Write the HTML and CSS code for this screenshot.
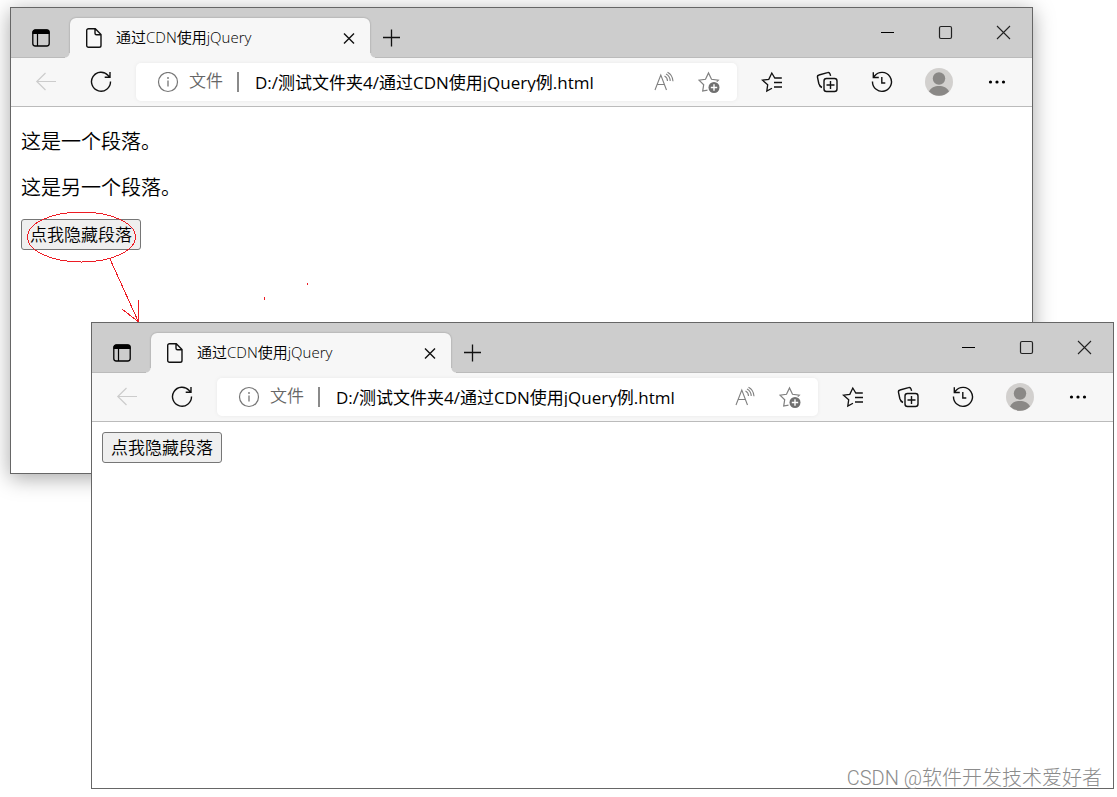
FILE: index.html
```
<!DOCTYPE html>
<html lang="zh-CN">
<head>
    <meta charset="UTF-8">
    <title>通过CDN使用jQuery</title>
    <link rel="stylesheet" href="styles.css">
</head>
<body>
    <!-- 图标 -->
    <svg class="icons" aria-hidden="true">
        <symbol id="i-tabs" viewBox="0 0 20 20"><rect x="1.8" y="2" width="16.4" height="16" rx="2.5" fill="none" stroke="#000" stroke-width="1.3"/><path d="M1.5 6V4.5a3 3 0 0 1 3-3h11a3 3 0 0 1 3 3V6z"/><path d="M6.5 6v12" stroke="#000" stroke-width="1.2"/></symbol>
        <symbol id="i-page" viewBox="0 0 20 20"><path d="M4.5 .8h6.8l5.7 5.700v11a1.8 1.8 0 0 1-1.8 1.8H4.500a1.800 1.800 0 0 1-1.800-1.800V2.600A1.800 1.800 0 0 1 4.500.8zM11 1v4.300a1.500 1.500 0 0 0 1.500 1.500h4.300" fill="none" stroke="#111" stroke-width="1.4"/></symbol>
        <symbol id="i-close" viewBox="0 0 20 20"><path d="M5 5.500l10 10M15 5.500l-10 10" stroke="#111" stroke-width="1.4"/></symbol>
        <symbol id="i-plus" viewBox="0 0 20 20"><path d="M10.500 1.500v17M2 9.500h17" stroke="#111" stroke-width="1.3"/></symbol>
        <symbol id="i-min" viewBox="0 0 20 20"><path d="M4 9.500h13" stroke="#000"/></symbol>
        <symbol id="i-max" viewBox="0 0 20 20"><rect x="4.500" y="3.500" width="12" height="12" rx="1.500" fill="none" stroke="#222" stroke-width="1.2"/></symbol>
        <symbol id="i-exit" viewBox="0 0 20 20"><path d="M4 3l13 13M17 3L4 16" stroke="#222" stroke-width="1.1"/></symbol>
        <symbol id="i-back" viewBox="0 0 22 22"><path d="M21 10.500H1.500M10.500 2L1.800 10.500l8.700 8.500" fill="none" stroke="#ccc" stroke-width="1.2"/></symbol>
        <symbol id="i-reload" viewBox="0 0 22 22"><path d="M20.500 10.500a9.500 9.500 0 1 1-2.300-6l1.800 1.700M20 1v5.300h-5.300" fill="none" stroke="#111" stroke-width="1.400"/></symbol>
        <symbol id="i-info" viewBox="0 0 22 22"><circle cx="11" cy="11" r="9.500" fill="none" stroke="#767676" stroke-width="1.200"/><path d="M11 9.500v6" stroke="#767676" stroke-width="1.300"/><circle cx="11" cy="7" r=".9" fill="#767676"/></symbol>
        <symbol id="i-read" viewBox="0 0 22 22"><path d="M2 19L7.800 4l5.700 15M4.200 13.500h7.500M11.500 5q3 1.500 3 5M13 3q4 2 4.200 7M14.500 1.300q5 2.500 5.500 9" fill="none" stroke="#808080" stroke-width="1.100"/></symbol>
        <symbol id="i-favadd" viewBox="0 0 22 22"><path d="M9.500 19.200l-4.800.9 1-6.400L1 9.200l6.500-.9 3-6.300 3 6.300 6.800.9-1.500 1.500" fill="none" stroke="#808080" stroke-width="1.200"/><circle cx="16" cy="16.500" r="5.500" fill="#707070"/><path d="M16 13.300v6.400M12.800 16.500h6.400" stroke="#fff" stroke-width="1.400"/></symbol>
        <symbol id="i-favs" viewBox="0 0 22 22"><path d="M11 17.200l-5.200 2.900.9-6.400L1.500 9.200l6.300-.9 3-6.300 3 5h7M13 11.500h8M13 16h8" fill="none" stroke="#111" stroke-width="1.300"/></symbol>
        <symbol id="i-coll" viewBox="0 0 22 22"><rect x="8" y="7.500" width="13" height="13" rx="2.500" fill="none" stroke="#111" stroke-width="1.400"/><path d="M14.500 10v8M10.500 14h8M6 16.500c-2-.8-2.700-2-3.200-4L1.500 6.300A2 2 0 0 1 3 4l8.500-2.300a2 2 0 0 1 2.500 1.200l.6 2" fill="none" stroke="#111" stroke-width="1.400"/></symbol>
        <symbol id="i-hist" viewBox="0 0 22 22"><path d="M1.500 10.500a9.500 9.500 0 1 0 2-5.500L2 6.500M2.300 1.200v5.300h5.500M10.800 6v6h3.500" fill="none" stroke="#111" stroke-width="1.400"/></symbol>
        <symbol id="i-user" viewBox="0 0 28 28"><circle cx="14" cy="14" r="14" fill="#d2d0ce"/><circle cx="14" cy="10.500" r="6.200" fill="#8a8886"/><path d="M4 23.500C6 19.500 9.500 18 14 18s8 1.500 10 5.500a14 14 0 0 1-20 0z" fill="#8a8886"/></symbol>
        <symbol id="i-more" viewBox="0 0 22 22"><circle cx="4.500" cy="11" r="1.600"/><circle cx="11" cy="11" r="1.600"/><circle cx="17.500" cy="11" r="1.600"/></symbol>
    </svg>

    <div class="desktop">
        <!-- 点击前 -->
        <div class="window before">
            <div class="titlebar">
                <button class="tabs" aria-label="标签页操作"><svg class="s20"><use href="#i-tabs"/></svg></button>
                <div class="tab">
                    <svg class="s20"><use href="#i-page"/></svg>
                    <span class="title">通过CDN使用jQuery</span>
                    <button aria-label="关闭标签页"><svg class="s20"><use href="#i-close"/></svg></button>
                </div>
                <button class="new" aria-label="新建标签页"><svg class="s20"><use href="#i-plus"/></svg></button>
                <div class="controls">
                    <button aria-label="最小化"><svg class="s20"><use href="#i-min"/></svg></button>
                    <button aria-label="最大化"><svg class="s20"><use href="#i-max"/></svg></button>
                    <button aria-label="关闭"><svg class="s20"><use href="#i-exit"/></svg></button>
                </div>
            </div>
            <div class="toolbar">
                <button aria-label="后退"><svg class="s22"><use href="#i-back"/></svg></button>
                <button aria-label="刷新"><svg class="s22"><use href="#i-reload"/></svg></button>
                <div class="address">
                    <svg class="s22"><use href="#i-info"/></svg>
                    <label for="url1">文件</label>
                    <input type="text" id="url1" value="D:/测试文件夹4/通过CDN使用jQuery例.html">
                    <button aria-label="大声朗读"><svg class="s22"><use href="#i-read"/></svg></button>
                    <button aria-label="添加收藏"><svg class="s22"><use href="#i-favadd"/></svg></button>
                </div>
                <button aria-label="收藏夹"><svg class="s22"><use href="#i-favs"/></svg></button>
                <button aria-label="集锦"><svg class="s22"><use href="#i-coll"/></svg></button>
                <button aria-label="历史记录"><svg class="s22"><use href="#i-hist"/></svg></button>
                <button class="user" aria-label="用户"><svg class="s28"><use href="#i-user"/></svg></button>
                <button aria-label="更多"><svg class="s22"><use href="#i-more"/></svg></button>
            </div>
            <div class="page">
                <p>这是一个段落。</p>
                <p>这是另一个段落。</p>
                <button class="hide">点我隐藏段落</button>
            </div>
        </div>

        <!-- 红色标注 -->
        <svg class="mark" width="320" height="330" aria-hidden="true">
            <ellipse cx="81.500" cy="237" rx="54" ry="25"/>
            <path d="M110 259L138.500 322M138.500 300v22M122 309l16.500 13M264.500 297v3M307.500 283v2"/>
        </svg>

        <!-- 点击后 -->
        <div class="window after">
            <div class="titlebar">
                <button class="tabs" aria-label="标签页操作"><svg class="s20"><use href="#i-tabs"/></svg></button>
                <div class="tab">
                    <svg class="s20"><use href="#i-page"/></svg>
                    <span class="title">通过CDN使用jQuery</span>
                    <button aria-label="关闭标签页"><svg class="s20"><use href="#i-close"/></svg></button>
                </div>
                <button class="new" aria-label="新建标签页"><svg class="s20"><use href="#i-plus"/></svg></button>
                <div class="controls">
                    <button aria-label="最小化"><svg class="s20"><use href="#i-min"/></svg></button>
                    <button aria-label="最大化"><svg class="s20"><use href="#i-max"/></svg></button>
                    <button aria-label="关闭"><svg class="s20"><use href="#i-exit"/></svg></button>
                </div>
            </div>
            <div class="toolbar">
                <button aria-label="后退"><svg class="s22"><use href="#i-back"/></svg></button>
                <button aria-label="刷新"><svg class="s22"><use href="#i-reload"/></svg></button>
                <div class="address">
                    <svg class="s22"><use href="#i-info"/></svg>
                    <label for="url2">文件</label>
                    <input type="text" id="url2" value="D:/测试文件夹4/通过CDN使用jQuery例.html">
                    <button aria-label="大声朗读"><svg class="s22"><use href="#i-read"/></svg></button>
                    <button aria-label="添加收藏"><svg class="s22"><use href="#i-favadd"/></svg></button>
                </div>
                <button aria-label="收藏夹"><svg class="s22"><use href="#i-favs"/></svg></button>
                <button aria-label="集锦"><svg class="s22"><use href="#i-coll"/></svg></button>
                <button aria-label="历史记录"><svg class="s22"><use href="#i-hist"/></svg></button>
                <button class="user" aria-label="用户"><svg class="s28"><use href="#i-user"/></svg></button>
                <button aria-label="更多"><svg class="s22"><use href="#i-more"/></svg></button>
            </div>
            <div class="page">
                <button class="hide">点我隐藏段落</button>
            </div>
        </div>

        <div class="watermark">CSDN @软件开发技术爱好者</div>
    </div>
</body>
</html>
```
FILE: styles.css
```
*{
    box-sizing: border-box;
}
body{
    margin: 0;
    background: #fff;
    color: #000;
    font-family: "Open Sans", "Noto Sans CJK SC", sans-serif;
    font-weight: 350;
}
button, input{
    font-family: inherit;
    font-weight: inherit;
    color: inherit;
    border: none;
    background: none;
    padding: 0;
}
button{
    display: flex;
    align-items: center;
    justify-content: center;
}
svg{
    display: block;
    flex: none;
}
.icons{
    position: absolute;
    width: 0;
    height: 0;
}
.s20{
    width: 20px;
    height: 20px;
}
.s22{
    width: 22px;
    height: 22px;
}
.s28{
    width: 28px;
    height: 28px;
}
.desktop{
    position: relative;
    min-height: 100vh;
    overflow: hidden;
}
/* 浏览器窗口 */
.window{
    position: absolute;
    border: 1px solid #666;
    background: #fff;
}
.before{
    top: 7px;
    left: 10px;
    right: 84px;
    box-shadow: 0 4px 20px rgba(0,0,0,0.35);
}
.after{
    top: 322px;
    left: 91px;
    right: 3px;
}
.titlebar{
    display: flex;
    height: 50px;
    background: #cdcdcd;
    box-shadow: inset 0 -1px #bbb;
}
.tabs{
    width: 59px;
    padding-top: 10px;
}
.tab{
    position: relative;
    display: flex;
    align-items: center;
    width: 300px;
    margin-top: 10px;
    padding: 0 11px 0 14px;
    background: #f7f7f7;
    border-radius: 6px 6px 0 0;
    box-shadow: 0 0 2px rgba(0,0,0,0.3);
    clip-path: inset(-3px -5px 0 -5px);
}
/* 标签页底部两侧的圆角 */
.tab::before, .tab::after{
    content: "";
    position: absolute;
    bottom: 0;
    width: 5px;
    height: 5px;
}
.tab::before{
    left: -5px;
    background: radial-gradient(circle at 0 0, #cdcdcd 4px, #f7f7f7 5px);
}
.tab::after{
    right: -5px;
    background: radial-gradient(circle at 100% 0, #cdcdcd 4px, #f7f7f7 5px);
}
.title{
    flex: 1;
    margin-left: 12px;
    padding-bottom: 2px;
    font-size: 15px;
    line-height: 20px;
}
.new{
    width: 42px;
    padding-top: 10px;
}
.controls{
    display: flex;
    margin-left: auto;
}
.controls button{
    width: 58px;
}
.toolbar{
    display: flex;
    align-items: center;
    height: 49px;
    padding: 0 8px 0 7px;
    background: #f7f7f7;
    border-bottom: 1px solid #bbb;
}
.toolbar button{
    width: 55px;
    height: 38px;
}
.toolbar .user{
    width: 60px;
}
.address{
    display: flex;
    flex: 1;
    align-items: center;
    min-width: 0;
    height: 38px;
    margin: 0 7px 0 8px;
    padding: 0 6px 0 21px;
    background: #fff;
    border-radius: 5px;
    box-shadow: 0 0 4px rgba(0,0,0,0.06);
}
.address label{
    margin: 0 14px 0 10px;
    padding-bottom: 2px;
    color: #666;
    font-size: 17px;
    line-height: 20px;
    white-space: nowrap;
}
.address input{
    flex: 1;
    min-width: 0;
    height: 20px;
    padding: 0 0 2px 16px;
    border-left: 2px solid #8a8a8a;
    font-size: 17px;
    font-weight: 400;
    line-height: 18px;
}
.address button{
    width: 45px;
}
/* 网页内容 */
.page{
    min-height: 366px;
    padding: 10px;
}
.page p{
    margin: 0 0 16px;
    font-size: 20px;
    line-height: 30px;
}
.page p:first-child{
    margin-top: 10px;
}
.hide{
    padding: 0 8px;
    border: 1px solid #767676;
    border-radius: 3px;
    background: #efefef;
    font-size: 17px;
    line-height: 29px;
}
.mark{
    position: absolute;
    top: 0;
    left: 0;
    fill: none;
    stroke: #ed1c24;
    shape-rendering: crispEdges;
    pointer-events: none;
}
.watermark{
    position: absolute;
    right: 15px;
    bottom: 4px;
    color: #8c8c8c;
    font-family: Roboto, "Noto Sans CJK SC", sans-serif;
    font-size: 20px;
    font-weight: 300;
    line-height: 30px;
}
```
